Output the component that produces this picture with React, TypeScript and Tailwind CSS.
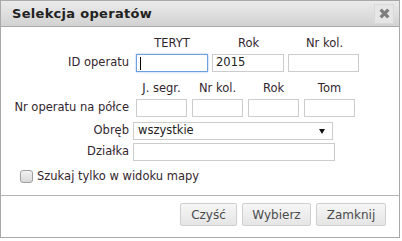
import React from 'react';

const font = { fontFamily: '"DejaVu Sans", Verdana, sans-serif' };

const Field: React.FC<{ w: string; children?: React.ReactNode; focused?: boolean }> = ({ w, children, focused }) => (
    <div
        className={`${w} h-[18px] flex items-center px-[3px] text-[11.5px] text-[#222] ${
            focused ? 'border border-[#6f9fdc] shadow-[0_0_2px_#9cc1ee]' : 'border border-[#cccccc]'
        }`}
    >
        {children}
    </div>
);

const App: React.FC = () => {
    return (
        <div className="w-[402px] h-[241px] bg-white" style={font}>
            <div className="w-[400px] h-[238px] border border-[#a9a9a9] bg-white flex flex-col text-[#33262f]">
                <div className="h-[26px] shrink-0 flex items-center justify-between pl-[11px] pr-[5px] border-b border-[#a9a9a9] bg-gradient-to-b from-[#ebebeb] to-[#d2d2d2]">
                    <span className="text-[13px] font-bold tracking-[0.3px] text-[#222]">Selekcja operatów</span>
                    <div className="w-[20px] h-[20px] flex items-center justify-center border border-[#d9d9d9] bg-[#e6e6e6]">
                        <svg width="11" height="11" viewBox="0 0 10 10">
                            <path d="M1.5 1.5 L8.5 8.5 M8.5 1.5 L1.5 8.5" stroke="#7e7e7e" strokeWidth="3" />
                        </svg>
                    </div>
                </div>

                <div className="flex flex-col text-[11.5px]">
                    <div className="flex gap-[5px] pl-[135px] mt-[9px] h-[16px] items-center">
                        <span className="w-[72px] text-center">TERYT</span>
                        <span className="w-[71px] text-center">Rok</span>
                        <span className="w-[71px] text-center">Nr kol.</span>
                    </div>
                    <div className="flex items-center mt-[2px]">
                        <span className="w-[128px] text-right">ID operatu</span>
                        <div className="flex gap-[4px] ml-[7px]">
                            <Field w="w-[72px]" focused>
                                <span className="w-px h-[13px] bg-black" />
                            </Field>
                            <Field w="w-[72px]">2015</Field>
                            <Field w="w-[71px]">{''}</Field>
                        </div>
                    </div>
                    <div className="flex gap-[5px] pl-[135px] mt-[9px] h-[16px] items-center">
                        <span className="w-[51px] text-center">J. segr.</span>
                        <span className="w-[51px] text-center">Nr kol.</span>
                        <span className="w-[51px] text-center">Rok</span>
                        <span className="w-[51px] text-center">Tom</span>
                    </div>
                    <div className="flex items-center mt-[2px]">
                        <span className="w-[128px] text-right">Nr operatu na półce</span>
                        <div className="flex gap-[5px] ml-[7px]">
                            <Field w="w-[51px]" />
                            <Field w="w-[51px]" />
                            <Field w="w-[51px]" />
                            <Field w="w-[51px]" />
                        </div>
                    </div>
                    <div className="flex items-center mt-[5px]">
                        <span className="w-[128px] text-right">Obręb</span>
                        <div className="ml-[4px] w-[200px] h-[18px] border border-[#cccccc] flex items-center justify-between pl-[4px] pr-[7px] text-[#222]">
                            <span>wszystkie</span>
                            <svg width="6" height="5" viewBox="0 0 6 5">
                                <path d="M0 0 H6 L3 5 Z" fill="#111" />
                            </svg>
                        </div>
                    </div>
                    <div className="flex items-center mt-[3px]">
                        <span className="w-[128px] text-right">Działka</span>
                        <div className="ml-[4px] w-[202px] h-[18px] border border-[#cccccc]" />
                    </div>
                    <div className="flex items-center mt-[7px] pl-[19px] gap-[4px]">
                        <div className="w-[13px] h-[13px] rounded-[3px] border border-[#a0a0a0] bg-gradient-to-b from-[#f2f2f2] to-[#d8d8d8]" />
                        <span className="text-[11.5px]">Szukaj tylko w widoku mapy</span>
                    </div>
                </div>

                <div className="mt-auto border-t border-[#b5b5b5] h-[42px] flex items-start justify-end gap-[5px] pr-[13px] pt-[7px]">
                    {[
                        { t: 'Czyść', w: 'w-[57px]' },
                        { t: 'Wybierz', w: 'w-[69px]' },
                        { t: 'Zamknij', w: 'w-[70px]' },
                    ].map((b) => (
                        <div
                            key={b.t}
                            className={`${b.w} h-[23px] flex items-center justify-center rounded-[2px] border border-[#cfcfcf] bg-gradient-to-b from-[#f6f6f6] to-[#e5e5e5] text-[12px] text-[#4b4b4b]`}
                        >
                            {b.t}
                        </div>
                    ))}
                </div>
            </div>
        </div>
    );
};

export default App;
